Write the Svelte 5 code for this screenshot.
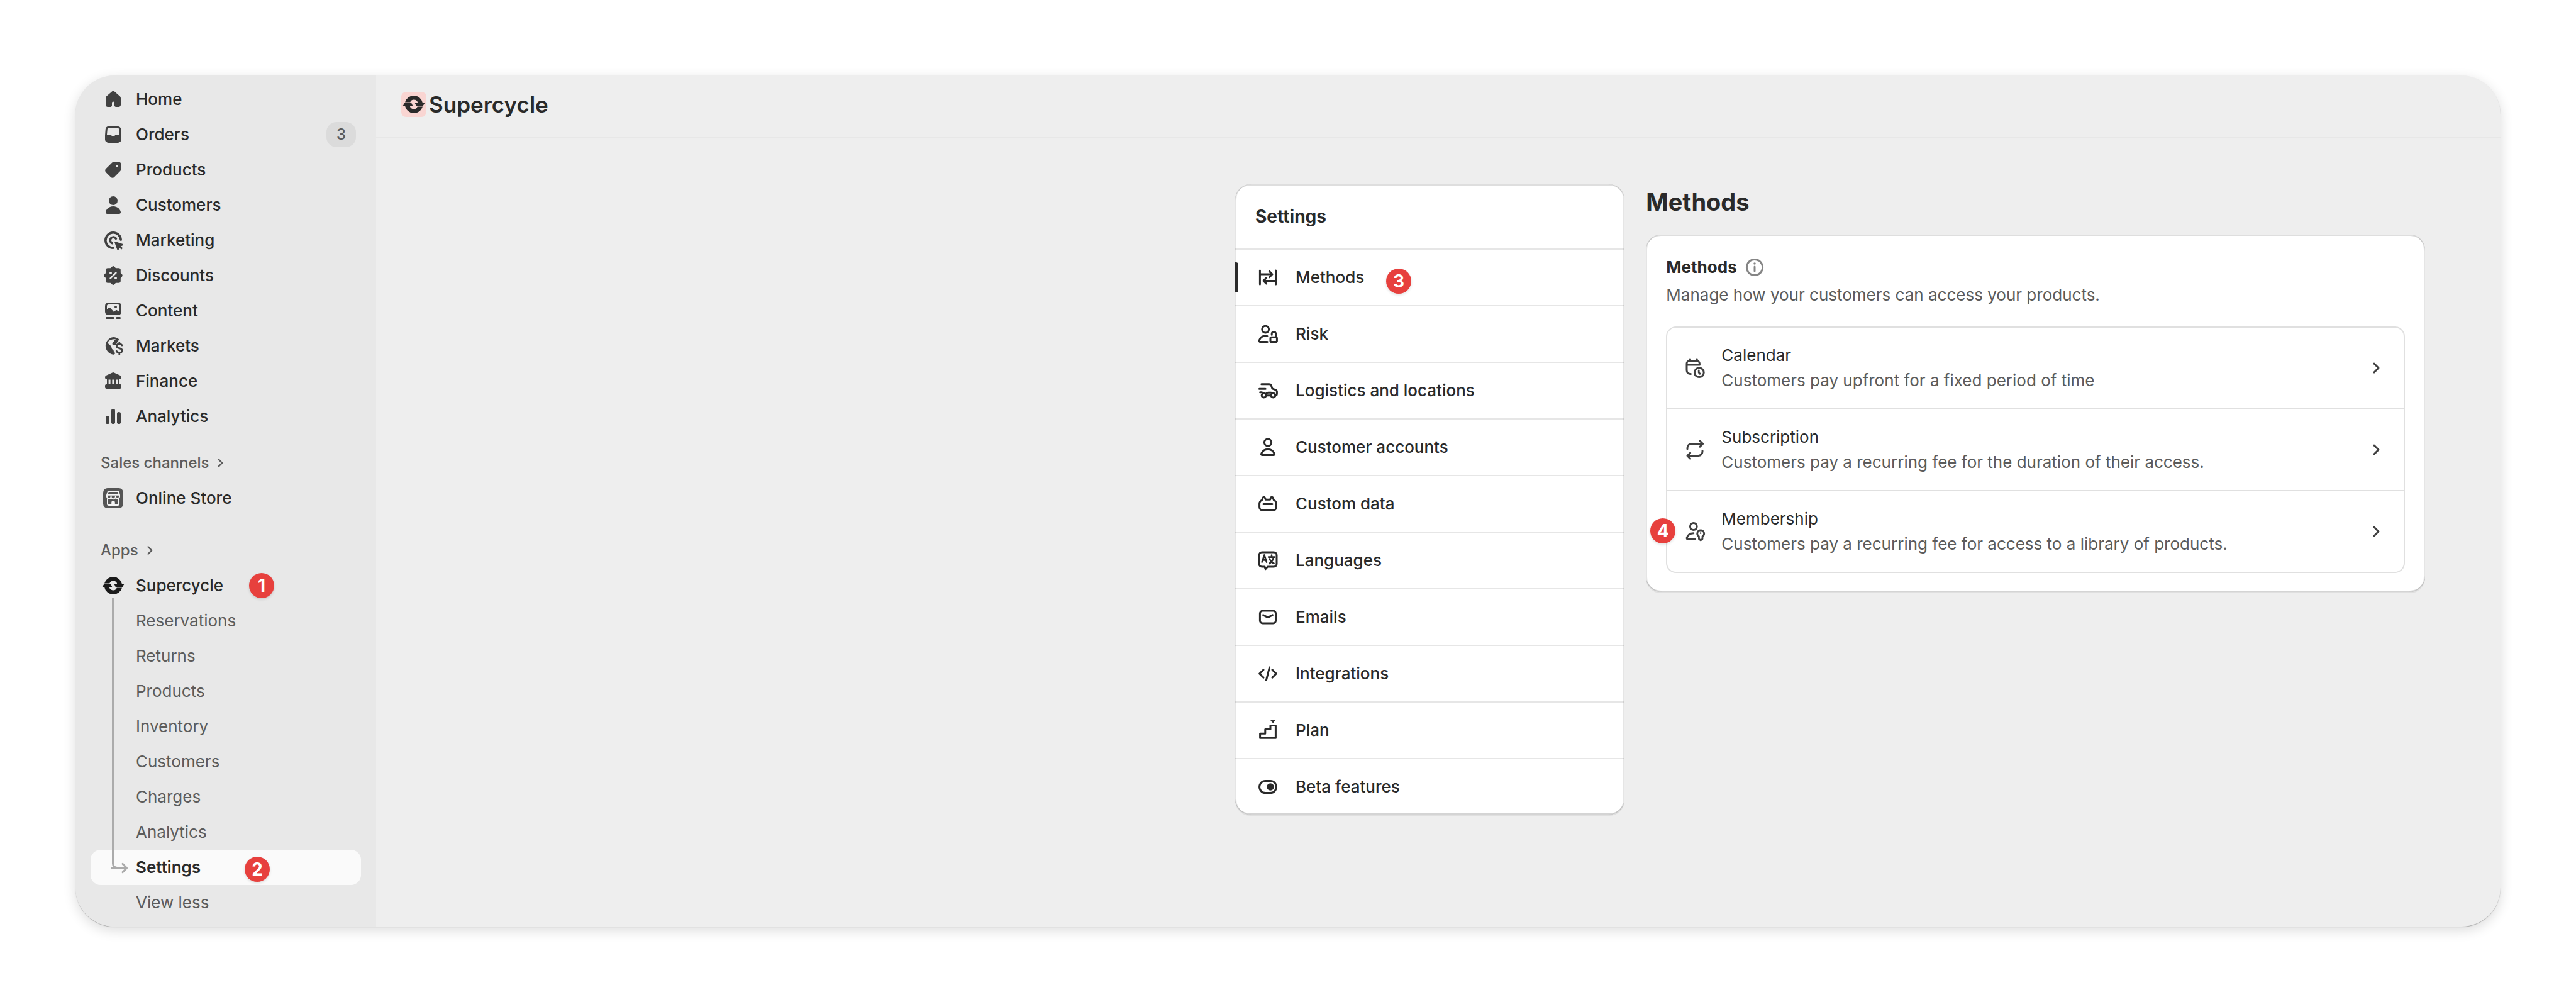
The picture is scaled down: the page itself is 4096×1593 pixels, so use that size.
<script>
    const icons = {
        home: '<path d="M9 3.7a1.5 1.5 0 0 1 2 0l4.2 3.7c.5.5.8 1.1.8 1.8v5.1c0 1-.7 1.7-1.7 1.7h-2.1c-.7 0-1.2-.5-1.2-1.2v-2a1 1 0 0 0-2 0v2c0 .7-.5 1.2-1.2 1.2H5.7C4.7 16 4 15.3 4 14.3V9.2c0-.7.3-1.3.8-1.8z"/>',
        orders: '<path fill-rule="evenodd" d="M6.1 3.5h7.8c1.2 0 2.1.9 2.2 2.1l.4 5v3.1a2.8 2.8 0 0 1-2.8 2.8H6.3a2.8 2.8 0 0 1-2.8-2.8v-3.1l.4-5c.1-1.2 1-2.1 2.2-2.1zM6.3 4.9c-.5 0-.9.4-.9.9L5 10h2.6c.5 0 .8.2 1 .6.3.5.7.9 1.4.9s1.1-.4 1.4-.9c.2-.4.5-.6 1-.6H15l-.4-4.2c0-.5-.4-.9-.9-.9z"/>',
        tag: '<path fill-rule="evenodd" d="M11.2 3.5h2.6a2.7 2.7 0 0 1 2.7 2.7v2.6c0 .8-.3 1.6-.9 2.2l-4.7 4.8a2 2 0 0 1-2.9 0L4.2 12a2 2 0 0 1 0-2.9L9 4.4c.6-.6 1.4-.9 2.2-.9zM13 6a1 1 0 1 0 0 2 1 1 0 0 0 0-2z"/>',
        person: '<circle cx="10" cy="6.5" r="3.5"/><path d="M4 15.8C4 13.9 6.3 11 10 11s6 2.9 6 4.8c0 .7-.5 1.2-1.2 1.2H5.2c-.7 0-1.2-.5-1.2-1.2z"/>',
        target: '<g fill="none" stroke="currentColor" stroke-width="1.8" stroke-linecap="round"><path d="M16.1 9.6A6.1 6.1 0 1 0 10 16.1"/><path d="M12.2 8.6A2.5 2.5 0 1 0 9.2 12.3"/></g><path d="M11.6 11l5.8 1.9c.6.2.6 1 .1 1.2l-1.4.7 1.5 1.5-1.1 1.1-1.5-1.5-.6 1.5c-.3.6-1.1.5-1.3-.1l-2-5.7c-.1-.4.2-.7.5-.6z"/>',
        discount: '<rect x="4.1" y="4.1" width="11.8" height="11.8" rx="1.6"/><rect x="4.4" y="4.4" width="11.2" height="11.2" rx="1.3" transform="rotate(45 10 10)"/><path d="M7.8 12.2l4.4-4.4" stroke="#e8e8e8" stroke-width="1.3" stroke-linecap="round"/><circle cx="8" cy="8" r="1" fill="#e8e8e8"/><circle cx="12" cy="12" r="1" fill="#e8e8e8"/>',
        content: '<path fill-rule="evenodd" d="M6.2 3.5h7.6a2.7 2.7 0 0 1 2.7 2.7v4.6a2.7 2.7 0 0 1-2.7 2.7H6.2a2.7 2.7 0 0 1-2.7-2.7V6.2a2.7 2.7 0 0 1 2.7-2.7zM6.3 5C5.5 5 5 5.5 5 6.3v2.6l1.4-1.1c.5-.4 1-.3 1.4.1l2.8 3.1 1.3-1.2c.4-.4.9-.4 1.3-.1L15 11V6.3c0-.8-.5-1.3-1.3-1.3z"/><circle cx="12" cy="7" r="1"/><path d="M4.7 15.7h5.5M12.9 15.7h2.4" stroke="currentColor" stroke-width="1.5" stroke-linecap="round"/>',
        globe: '<path fill-rule="evenodd" d="M10 3c2 0 3.9.9 5.1 2.2-.7.1-1.2.5-1.4 1.1l-1.5 2.4c-.4.6-1 .9-1.6.8-.7 0-1.2-.4-1.3-1-.1-.7.2-1.2.7-1.5.6-.3.7-.7.9-1.2.2-.6.7-1 1.3-1.1C9.7 4.4 7.4 5 6.2 6.4c-.6.7-.4 1.5.1 2 .6.6 1.3 1 1.9 1.7.4.5.5 1 .6 1.7.1.7.7 1.1 1.2 1.4.5.3.3 1 .7 1.5.3.4.8.6.8 1.1 0 .6-.5 1.1-1.3 1.1A7 7 0 0 1 10 3z"/><path d="M17 9.5c-.4-.8-1.2-1.1-2.1-1.1-1.3 0-2.2.7-2.2 1.7 0 2.4 4.4 1.1 4.4 3.5 0 1-.9 1.7-2.2 1.7-1 0-1.9-.4-2.3-1.2M14.9 7.3v1M14.9 15.5v1.3" fill="none" stroke="currentColor" stroke-width="1.4" stroke-linecap="round"/>',
        bank: '<path d="M9.3 3.2a1.6 1.6 0 0 1 1.4 0l4.7 2.2c.7.3 1.1.9 1.1 1.6 0 .9-.6 1.5-1.5 1.5v3.9h.3c.7 0 1.2.5 1.2 1.2v1.2c0 .7-.5 1.2-1.2 1.2H4.7c-.7 0-1.2-.5-1.2-1.2v-1.2c0-.7.5-1.2 1.2-1.2H5V8.5c-.9 0-1.5-.6-1.5-1.5 0-.7.4-1.3 1.1-1.6zM6.3 8.8v3.6h1.5V8.8zM9.2 8.8v3.6h1.6V8.8zM12.2 8.8v3.6h1.5V8.8z" fill-rule="evenodd"/>',
        bars: '<rect x="4" y="9.5" width="3" height="6.5" rx="1.4"/><rect x="8.5" y="4" width="3" height="12" rx="1.4"/><rect x="13" y="6.5" width="3" height="9.5" rx="1.4"/>',
        store: '<rect x="2" y="2" width="16" height="16" rx="3.5" fill="#555"/><g fill="none" stroke="#f4f4f4" stroke-width="1" stroke-linejoin="round"><path d="M6 4.5h8l1 3v1.3a1.5 1.5 0 0 1-3.1 0 1.7 1.7 0 0 1-3.6 0 1.6 1.6 0 0 1-3.3 0V7.5zM5 7.4h10"/><path d="M5.5 10.5v4c0 .6.4 1 1 1h7c.6 0 1-.4 1-1v-4"/></g><path d="M8.6 15.5v-2a1.4 1.4 0 0 1 2.8 0v2z" fill="#f4f4f4"/>',
        supercycle: '<path d="M3 8.2A7.2 7.2 0 0 1 17 8.8L18.7 8.9 17.3 11.1H11.9L10.9 9H13.2A3.2 3.2 0 0 0 7.1 8.2z"/><path d="M3 8.2A7.2 7.2 0 0 1 17 8.8L18.7 8.9 17.3 11.1H11.9L10.9 9H13.2A3.2 3.2 0 0 0 7.1 8.2z" transform="rotate(180 10 10)"/>',
        methods: '<path d="M3.7 4.5v11M16.3 4.5v11M3.7 7.5h9.6M11.2 5.2l2.3 2.3-2.3 2.3M16.3 12.7H6.7M8.8 10.4l-2.3 2.3 2.3 2.3"/>',
        risk: '<circle cx="8.1" cy="6.3" r="2.7"/><path d="M9.6 16.2H3.9c-.6 0-1-.5-.8-1.1.8-2.3 2.6-3.6 5-3.6.5 0 1 .1 1.4.2"/><rect x="12" y="12.6" width="5.2" height="3.7" rx=".8"/><path d="M13.1 10.6v-.8a1.6 1.6 0 0 1 3.2 0v2.6"/>',
        truck: '<path d="M4.9 4.9h6c.9 0 1.5.4 1.8 1.2l.8 2.3 2.6 1c.7.3 1.1.8 1.1 1.5v1.3c0 1-.4 1.7-1.3 1.7M3.2 8.6h4.9M3.8 11.4h1.5M8.5 12.5c.5-.6 1-.9 1.8-.9h2.3"/><circle cx="6.8" cy="13.8" r="1.7"/><circle cx="14.2" cy="13.8" r="1.7"/><path d="M8.6 13.9h3.8"/>',
        user: '<circle cx="10" cy="6.3" r="2.8"/><path d="M4.8 15.1c.8-1.9 2.7-3.5 5.2-3.5s4.4 1.6 5.2 3.5c.3.6-.2 1.2-.8 1.2H5.6c-.6 0-1.1-.6-.8-1.2z"/>',
        custom: '<path d="M5.3 7l.7-1.8c.3-.7 1.4-.7 1.7 0L8.2 6.6h3.6l.5-1.4c.3-.7 1.4-.7 1.7 0L14.7 7c1.3.6 2 1.7 2 3v2.5a2.7 2.7 0 0 1-2.7 2.7H6a2.7 2.7 0 0 1-2.7-2.7V10c0-1.3.7-2.4 2-3z"/><path d="M6.5 10.2h7"/>',
        language: '<path d="M5.3 3.5h9.4a2.3 2.3 0 0 1 2.3 2.3v6.9a2.3 2.3 0 0 1-2.3 2.3H9.8l-1.7 1.8L7.5 15H5.3A2.3 2.3 0 0 1 3 12.7V5.8a2.3 2.3 0 0 1 2.3-2.3z"/><path d="M5.3 11.3L7.2 5.7l1.8 5.6M5.9 9.7h2.5M10.5 7.3h5M13 5.8v1.5M11.2 12.4c2-1.2 3-2.8 3.3-5M11.4 8.8c.6 1.7 1.7 2.8 3.4 3.6" stroke-width="1.3"/>',
        mail: '<rect x="3.7" y="5" width="12.6" height="10" rx="2.2"/><path d="M6.3 8.4L10 10.3l3.7-1.9"/>',
        code: '<path d="M6.5 6.9L3.3 10l3.2 3.1M13.5 6.9l3.2 3.1-3.2 3.1M11.3 5L8.7 15.2"/>',
        stairs: '<path d="M3.8 16.1v-3.5h4.1V9.3h4.1V6.2h4.2v9.9z"/><path d="M12.6 2.2h3l-1.5 1.9z" fill="currentColor" stroke-width=".5"/>',
        toggle: '<rect x="3.3" y="5.3" width="13.4" height="9.5" rx="4.7"/><circle cx="12" cy="10" r="2.9" fill="currentColor" stroke="none"/>',
        calendar: '<path d="M6.7 14.8h-.3a2.9 2.9 0 0 1-2.9-2.9V6.5a2.3 2.3 0 0 1 2.3-2.3h5.6a2.3 2.3 0 0 1 2.3 2.3v1H3.7M6.2 2.9v1.2M11.6 2.9v1.2"/><circle cx="13.4" cy="13.6" r="3.7"/><path d="M13.1 11.9v1.7l.9 1" stroke-width="1.4"/>',
        repeat: '<path d="M4 9.4V8.6a3.3 3.3 0 0 1 3.3-3.3h8.6M14 3l2.3 2.3L14 7.6M16 10.7v.8a3.3 3.3 0 0 1-3.3 3.3H4.2M6.3 12.5L4 14.8l2.3 2.3"/>',
        member: '<circle cx="8.9" cy="6" r="2.7"/><path d="M10.1 16.1H4.4c-.6 0-1-.5-.8-1.1.8-2.2 2.7-3.6 5.3-3.6"/><path d="M14.6 8.9a2.7 2.7 0 0 1 1.4 5v2l-1.4 1.1-1.4-1.1v-2a2.7 2.7 0 0 1 1.4-5z" stroke-width="1.4"/><circle cx="14.6" cy="11.3" r=".5" fill="currentColor" stroke-width=".5"/>',
        info: '<circle cx="10" cy="10" r="6.3"/><path d="M10 9.5v3.5"/><circle cx="10" cy="7" r=".9" fill="currentColor" stroke="none"/>',
        chevron: '<path d="M8.5 6.5L12 10l-3.5 3.5"/>',
        branch: '<path d="M13.5 7.2L16.8 10.5 13.5 13.8M16.5 10.5H5"/>'
    };

    const mainNav = [
        { label: 'Home', icon: 'home' },
        { label: 'Orders', icon: 'orders', count: 3 },
        { label: 'Products', icon: 'tag' },
        { label: 'Customers', icon: 'person' },
        { label: 'Marketing', icon: 'target' },
        { label: 'Discounts', icon: 'discount' },
        { label: 'Content', icon: 'content' },
        { label: 'Markets', icon: 'globe' },
        { label: 'Finance', icon: 'bank' },
        { label: 'Analytics', icon: 'bars' }
    ];

    const appNav = ['Reservations', 'Returns', 'Products', 'Inventory', 'Customers', 'Charges', 'Analytics', 'Settings', 'View less'];

    const settings = [
        { label: 'Methods', icon: 'methods' },
        { label: 'Risk', icon: 'risk' },
        { label: 'Logistics and locations', icon: 'truck' },
        { label: 'Customer accounts', icon: 'user' },
        { label: 'Custom data', icon: 'custom' },
        { label: 'Languages', icon: 'language' },
        { label: 'Emails', icon: 'mail' },
        { label: 'Integrations', icon: 'code' },
        { label: 'Plan', icon: 'stairs' },
        { label: 'Beta features', icon: 'toggle' }
    ];

    const methods = [
        { name: 'Calendar', icon: 'calendar', text: 'Customers pay upfront for a fixed period of time' },
        { name: 'Subscription', icon: 'repeat', text: 'Customers pay a recurring fee for the duration of their access.' },
        { name: 'Membership', icon: 'member', text: 'Customers pay a recurring fee for access to a library of products.' }
    ];

    let activePage = $state('Settings');
    let activeSetting = $state('Methods');
</script>

{#snippet solid(name)}
    <svg class="icon solid" viewBox="0 0 20 20" aria-hidden="true">{@html icons[name]}</svg>
{/snippet}

{#snippet line(name)}
    <svg class="icon line" viewBox="0 0 20 20" aria-hidden="true">{@html icons[name]}</svg>
{/snippet}

<div class="page">
    <div class="window">
        <nav class="sidebar">
            <ul>
                {#each mainNav as item}
                    <li>
                        <a class="nav-item" href="#{item.label.toLowerCase()}">
                            {@render solid(item.icon)}
                            <span>{item.label}</span>
                            {#if item.count}<span class="count">{item.count}</span>{/if}
                        </a>
                    </li>
                {/each}
            </ul>

            <button class="section-title channels">Sales channels {@render line('chevron')}</button>
            <a class="nav-item" href="#online-store">{@render solid('store')}<span>Online Store</span></a>

            <button class="section-title apps">Apps {@render line('chevron')}</button>
            <a class="nav-item app" href="#supercycle">
                {@render solid('supercycle')}<span>Supercycle</span>
                <span class="step step-1">1</span>
            </a>
            <ul class="sub-nav">
                {#each appNav as page}
                    <li>
                        <a
                            class="nav-item sub"
                            class:active={page === activePage}
                            href="#app-{page.toLowerCase().replace(' ', '-')}"
                            onclick={() => (activePage = page)}
                        >
                            {#if page === activePage}<span class="branch">{@render line('branch')}</span>{/if}
                            <span>{page}</span>
                            {#if page === 'Settings'}<span class="step step-2">2</span>{/if}
                        </a>
                    </li>
                {/each}
            </ul>
        </nav>

        <div class="main">
            <header class="topbar">
                <span class="app-logo">{@render solid('supercycle')}</span>
                <span class="app-name">Supercycle</span>
            </header>

            <main class="content">
                <section class="card settings">
                    <h2>Settings</h2>
                    <ul>
                        {#each settings as item}
                            <li>
                                <button
                                    class="setting"
                                    class:current={item.label === activeSetting}
                                    onclick={() => (activeSetting = item.label)}
                                >
                                    {@render line(item.icon)}
                                    <span>{item.label}</span>
                                    {#if item.label === 'Methods'}<span class="step step-3">3</span>{/if}
                                </button>
                            </li>
                        {/each}
                    </ul>
                </section>

                <section class="detail">
                    <h1>Methods</h1>
                    <div class="card methods">
                        <div class="card-title">
                            <h2>Methods</h2>
                            <button class="info" aria-label="About methods">{@render line('info')}</button>
                        </div>
                        <p>Manage how your customers can access your products.</p>
                        <ul class="method-list">
                            {#each methods as method}
                                <li>
                                    <a class="method" href="#{method.name.toLowerCase()}">
                                        {@render line(method.icon)}
                                        <span class="method-text">
                                            <span class="method-name">{method.name}</span>
                                            <span>{method.text}</span>
                                        </span>
                                        {@render line('chevron')}
                                        {#if method.name === 'Membership'}<span class="step step-4">4</span>{/if}
                                    </a>
                                </li>
                            {/each}
                        </ul>
                    </div>
                </section>
            </main>
        </div>
    </div>
</div>

<style>
    :global(body) { margin: 0; background: #fff; }
    * { box-sizing: border-box; }
    ul { list-style: none; margin: 0; padding: 0; }
    h1, h2, p { margin: 0; }
    a { color: inherit; text-decoration: none; }
    button { border: 0; background: none; padding: 0; font: inherit; color: inherit; text-align: left; cursor: pointer; }

    .page { min-height: 100vh; padding: 120px; display: flex; font-family: Inter, "Liberation Sans", sans-serif; font-size: 26px; line-height: 40px; font-weight: 400; color: #2a2a2a; }
    .window { flex: 1; display: flex; border-radius: 62px; overflow: hidden; background: #eee; box-shadow: 0 1px 1px rgba(0, 0, 0, 0.25), 0 6px 20px rgba(0, 0, 0, 0.14); }

    .icon { width: 40px; height: 40px; flex: none; display: block; }
    .solid { fill: currentColor; }
    .line { fill: none; stroke: currentColor; stroke-width: 1.5; stroke-linecap: round; stroke-linejoin: round; }

    .sidebar { width: 478px; flex: none; padding: 10px 24px; background: #e8e8e8; }
    .nav-item { position: relative; display: flex; align-items: center; gap: 16px; height: 56px; padding: 0 8px 0 16px; border-radius: 16px; font-weight: 550; }
    .nav-item .icon { color: #414141; }
    .app .icon { color: #1a1a1a; }
    .count { margin-left: auto; padding: 0 16px; border-radius: 16px; background: #dbdbdb; color: #5c5c5c; font-size: 24px; font-weight: 500; }
    .section-title { display: flex; align-items: center; width: 100%; height: 56px; padding-left: 16px; font-size: 24px; font-weight: 550; color: #5c5c5c; }
    .section-title .icon { width: 32px; height: 32px; margin-left: 2px; }
    .channels { margin-top: 18px; }
    .apps { margin-top: 27px; }

    .sub-nav { position: relative; }
    .sub-nav::before { content: ""; position: absolute; z-index: 1; left: 34px; top: -8px; bottom: 82px; width: 16px; border-left: 3px solid #ababab; border-bottom: 3px solid #ababab; border-bottom-left-radius: 8px; }
    .sub { padding-left: 72px; font-weight: 400; color: #5c5c5c; }
    .sub.active { background: #fafafa; color: #2a2a2a; font-weight: 600; }
    .branch { position: absolute; left: 24px; top: 8px; }
    .branch .icon { color: #ababab; }

    .step { position: absolute; display: grid; place-items: center; width: 40px; height: 40px; border-radius: 50%; background: #e7403d; color: #fff; font-size: 28px; font-weight: 700; box-shadow: 0 2px 4px rgba(0, 0, 0, 0.12); }
    .step-1 { left: 252px; top: 8px; }
    .step-2 { left: 245px; top: 11px; }
    .step-3 { left: 240px; top: 30px; }
    .step-4 { left: -27px; top: 43px; }

    .main { flex: 1; min-width: 0; }
    .topbar { display: flex; align-items: center; gap: 4px; padding: 26px 40px 32px; border-bottom: 2px solid #e7e7e7; }
    .app-logo { border-radius: 8px; background: #f9d5d2; }
    .app-name { font-size: 35px; font-weight: 600; }

    .content { display: grid; grid-template-columns: 1fr 2fr; gap: 34px; align-items: start; max-width: 1892px; margin: 73px 120px 120px auto; }
    .card { position: relative; border-radius: 24px; background: #fff; box-shadow: 0 2px 0 rgba(26, 26, 26, 0.07); }
    .card::after { content: ""; position: absolute; inset: 0; border-radius: 24px; pointer-events: none; box-shadow: inset 2px 0 0 rgba(0, 0, 0, 0.1), inset -2px 0 0 rgba(0, 0, 0, 0.1), inset 0 -2px 0 rgba(0, 0, 0, 0.17), inset 0 2px 0 rgba(190, 190, 190, 0.5); }

    .settings h2 { padding: 31px 32px; font-size: 28px; font-weight: 650; }
    .settings li { border-top: 2px solid #e6e6e6; }
    .setting { position: relative; display: flex; align-items: center; gap: 24px; width: 100%; height: 88px; padding: 0 32px; font-weight: 550; }
    .setting.current::before { content: ""; position: absolute; z-index: 1; left: 0; top: 20px; bottom: 20px; width: 5px; border-radius: 0 4px 4px 0; background: #2a2a2a; }

    .detail h1 { font-size: 38px; line-height: 56px; font-weight: 700; margin-bottom: 24px; }
    .methods { padding: 32px 32px 30px; }
    .methods p { margin-top: 4px; color: #5c5c5c; }
    .card-title { display: flex; align-items: center; gap: 8px; }
    .card-title h2 { font-size: 26px; font-weight: 650; }
    .info { color: #858585; }
    .method-list { margin-top: 30px; border: 2px solid #e0e0e0; border-radius: 16px; }
    .method-list li + li { border-top: 2px solid #e0e0e0; }
    .method { position: relative; display: flex; align-items: center; gap: 22px; padding: 24px; }
    .method .icon { color: #404040; }
    .method-text { flex: 1; display: flex; flex-direction: column; color: #5c5c5c; }
    .method-name { color: #2a2a2a; }
</style>
